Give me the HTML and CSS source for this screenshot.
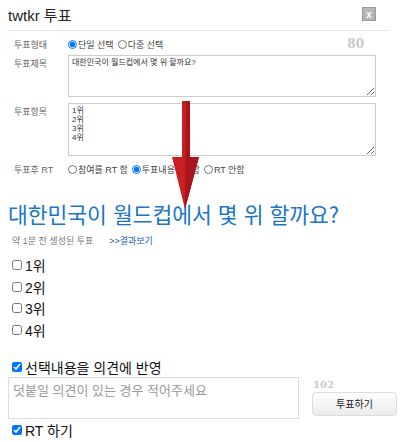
FILE: index.html
```html
<!DOCTYPE html>
<html lang="ko">
<head>
    <meta charset="UTF-8">
    <title>twtkr 투표</title>
    <link rel="stylesheet" href="styles.css">
</head>
<body>
    <div class="popup">
        <div class="popup-head">
            <span class="popup-title">twtkr 투표</span>
            <span class="close-btn">x</span>
        </div>

        <!-- 투표 만들기 폼 -->
        <div class="vote-form">
            <div class="form-row">
                <span class="label">투표형태</span>
                <div class="choices">
                    <label><input type="radio" name="kind" checked>단일 선택</label>
                    <label><input type="radio" name="kind">다중 선택</label>
                </div>
                <span class="counter">80</span>
            </div>
            <div class="form-row top">
                <span class="label">투표제목</span>
                <textarea class="box title-box">대한민국이 월드컵에서 몇 위 할까요?</textarea>
            </div>
            <div class="form-row top">
                <span class="label">투표항목</span>
                <textarea class="box item-box">1위
2위
3위
4위</textarea>
            </div>
            <div class="form-row">
                <span class="label">투표후 RT</span>
                <div class="choices">
                    <label><input type="radio" name="rt">참여를 RT 함</label>
                    <label><input type="radio" name="rt" checked>투표내용 RT 함</label>
                    <label><input type="radio" name="rt">RT 안함</label>
                </div>
            </div>
        </div>

        <!-- 미리보기 -->
        <div class="preview">
            <h2 class="vote-title">대한민국이 월드컵에서 몇 위 할까요?</h2>
            <div class="vote-meta">
                <span>약 1분 전 생성된 투표</span>
                <a href="#">&gt;&gt;결과보기</a>
            </div>
            <ul class="vote-items">
                <li><label><input type="checkbox">1위</label></li>
                <li><label><input type="checkbox">2위</label></li>
                <li><label><input type="checkbox">3위</label></li>
                <li><label><input type="checkbox">4위</label></li>
            </ul>
            <label class="opt first"><input type="checkbox" checked>선택내용을 의견에 반영</label>
            <div class="comment-row">
                <textarea class="comment" placeholder="덧붙일 의견이 있는 경우 적어주세요"></textarea>
                <div class="submit-col">
                    <span class="counter small">102</span>
                    <button type="button">투표하기</button>
                </div>
            </div>
            <label class="opt"><input type="checkbox" checked>RT 하기</label>
        </div>

        <svg class="arrow" width="40" height="120" viewBox="0 0 40 120">
            <path d="M10 0 H18 V56 H27 L13 108 L0 56 H10 Z" fill="#c81f22"/>
            <path d="M14 0 H18 V56 H27 L13 108 Z" fill="#a8151a"/>
        </svg>
    </div>
</body>
</html>
```

FILE: styles.css
```css
body {
    margin: 0;
    background-color: #fff;
    font-family: "Liberation Sans", "Noto Sans CJK KR", sans-serif;
    color: #222;
}

.popup {
    position: relative;
    width: 384px;
    padding: 0 8px;
}

.popup-head {
    display: flex;
    justify-content: space-between;
    align-items: center;
    height: 30px;
    border-bottom: 1px solid #e6e6e6;
    width: 380px;
}

.popup-title {
    font-size: 15px;
    color: #222;
    margin-top: -2px;
}

.close-btn {
    width: 14px;
    height: 14px;
    margin-right: 12px;
    margin-top: -2px;
    background-color: #b5b5b5;
    border: 1px solid #9a9a9a;
    color: #fff;
    font-size: 10px;
    font-weight: bold;
    line-height: 13px;
    text-align: center;
    box-sizing: border-box;
}

.vote-form {
    padding: 6px 0 0 6px;
}

.form-row {
    display: flex;
    align-items: center;
    height: 14px;
    margin-bottom: 4px;
    font-size: 9px;
    color: #555;
}

.form-row.top {
    align-items: flex-start;
    height: auto;
    margin-bottom: 6px;
}

.form-row.top .label {
    margin-top: 2px;
}

.label {
    width: 54px;
    flex-shrink: 0;
    color: #666;
}

.choices {
    display: flex;
    gap: 4px;
    color: #444;
}

.choices label {
    display: flex;
    align-items: center;
}

.choices input {
    width: 9px;
    height: 9px;
    margin: 0 1px 0 0;
}

.counter {
    margin-left: auto;
    margin-right: 28px;
    font-family: "DejaVu Serif", serif;
    font-weight: bold;
    font-size: 12px;
    color: #c9c9c9;
}

.box {
    width: 308px;
    border: 1px solid #ccc;
    box-sizing: border-box;
    font-family: "Liberation Sans", "Noto Sans CJK KR", sans-serif;
    font-size: 8px;
    line-height: 9px;
    padding: 2px 3px;
    color: #333;
    margin: 0;
}

.title-box {
    height: 42px;
}

.item-box {
    height: 53px;
}

.preview {
    margin-top: 24px;
}

.vote-title {
    margin: 0;
    font-size: 21.5px;
    font-weight: normal;
    color: #1875c8;
    line-height: 28px;
    font-family: "Noto Sans CJK KR", sans-serif;
}

.vote-meta {
    display: flex;
    gap: 16px;
    margin: 6px 0 8px 4px;
    font-size: 9px;
    color: #777;
}

.vote-meta a {
    color: #1a5fae;
    text-decoration: none;
}

.vote-items {
    list-style: none;
    margin: 0;
    padding: 0 0 0 4px;
}

.vote-items li {
    height: 21.7px;
}

label {
    display: flex;
    align-items: center;
}

.vote-items label,
.opt {
    font-size: 14px;
    color: #111;
}

.vote-items input,
.opt input {
    width: 10px;
    height: 10px;
    margin: 0 3px 0 0;
}

.opt {
    padding-left: 4px;
    margin-top: 3px;
    height: 16px;
}

.opt.first {
    margin-top: 17px;
}

.comment-row {
    display: flex;
    margin-top: 2px;
    width: 392px;
}

.comment {
    flex-shrink: 0;
    width: 291px;
    height: 42px;
    border: 1px solid #ddd;
    box-sizing: border-box;
    padding: 2px 4px;
    font-family: "Liberation Sans", "Noto Sans CJK KR", sans-serif;
    font-size: 13px;
    resize: none;
    margin: 0;
}

.comment::placeholder {
    color: #999;
}

.submit-col {
    flex-shrink: 0;
    display: flex;
    flex-direction: column;
    margin-left: 13px;
}

.counter.small {
    margin: 2px 0 2px 1px;
    font-size: 10px;
}

.submit-col button {
    width: 85px;
    height: 24px;
    border: 1px solid #ddd;
    border-radius: 4px;
    background: linear-gradient(#fdfdfd, #ececec);
    font-family: "Noto Sans CJK KR", sans-serif;
    font-size: 10px;
    color: #222;
    cursor: pointer;
}

.arrow {
    position: absolute;
    left: 172px;
    top: 101px;
}
```
